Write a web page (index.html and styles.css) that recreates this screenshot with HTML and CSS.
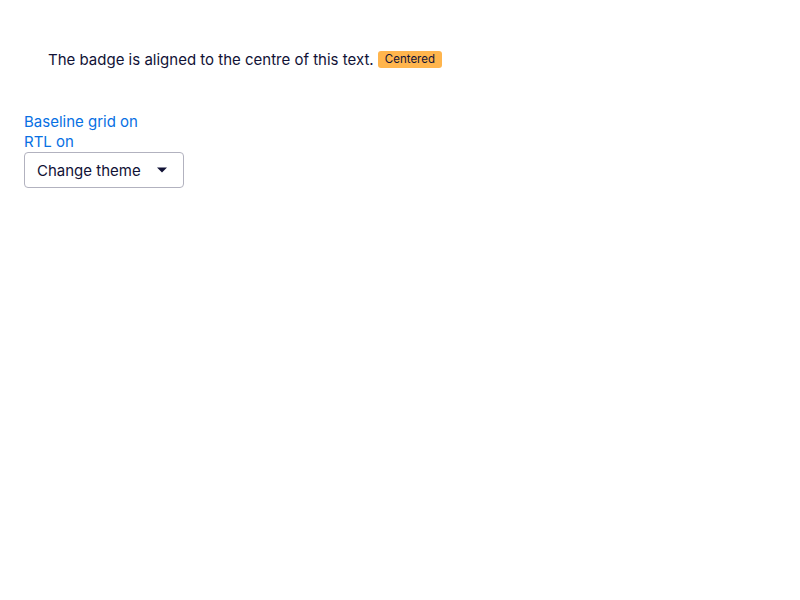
FILE: index.html
```html
<!DOCTYPE html>
<html>
<head>
<meta charset="utf-8">
<link rel="stylesheet" href="styles.css">
</head>
<body>
<div class="page">
  <div class="demo">
    <p class="text">The badge is aligned to the centre of this text. <span class="badge">Centered</span></p>
  </div>
  <div class="controls">
    <a class="link" href="#">Baseline grid on</a>
    <a class="link" href="#">RTL on</a>
    <div class="select">
      <span>Change theme</span>
      <svg class="caret" width="10" height="6" viewBox="0 0 10 6"><path d="M0 0.5 H10 L5 5.5 Z" fill="#111236"/></svg>
    </div>
  </div>
</div>
</body>
</html>
```
FILE: styles.css
```css
html, body { margin: 0; padding: 0; background: #fff; }
body { font-family: Inter, "Noto Sans", sans-serif; color: #111236; }
.page { padding: 24px; }
.demo { padding: 25px 24px 0; height: 47px; }
.text { margin: 0; font-size: 15px; line-height: 22px; }
.badge {
  display: inline-block;
  background: #ffb54d;
  border-radius: 3px;
  font-size: 11.5px;
  line-height: 17px;
  padding: 0 7px;
  vertical-align: middle;
  position: relative;
  top: -1px;
}
.controls { display: flex; flex-direction: column; align-items: flex-start; margin-top: 16px; }
.link { color: #0770e3; text-decoration: none; font-size: 15px; line-height: 20px; }
.select {
  width: 160px;
  height: 36px;
  box-sizing: border-box;
  border: 1px solid #b2b2bf;
  border-radius: 4px;
  display: flex;
  align-items: center;
  justify-content: space-between;
  padding: 0 16px 0 12px;
  font-size: 15px;
}
```
